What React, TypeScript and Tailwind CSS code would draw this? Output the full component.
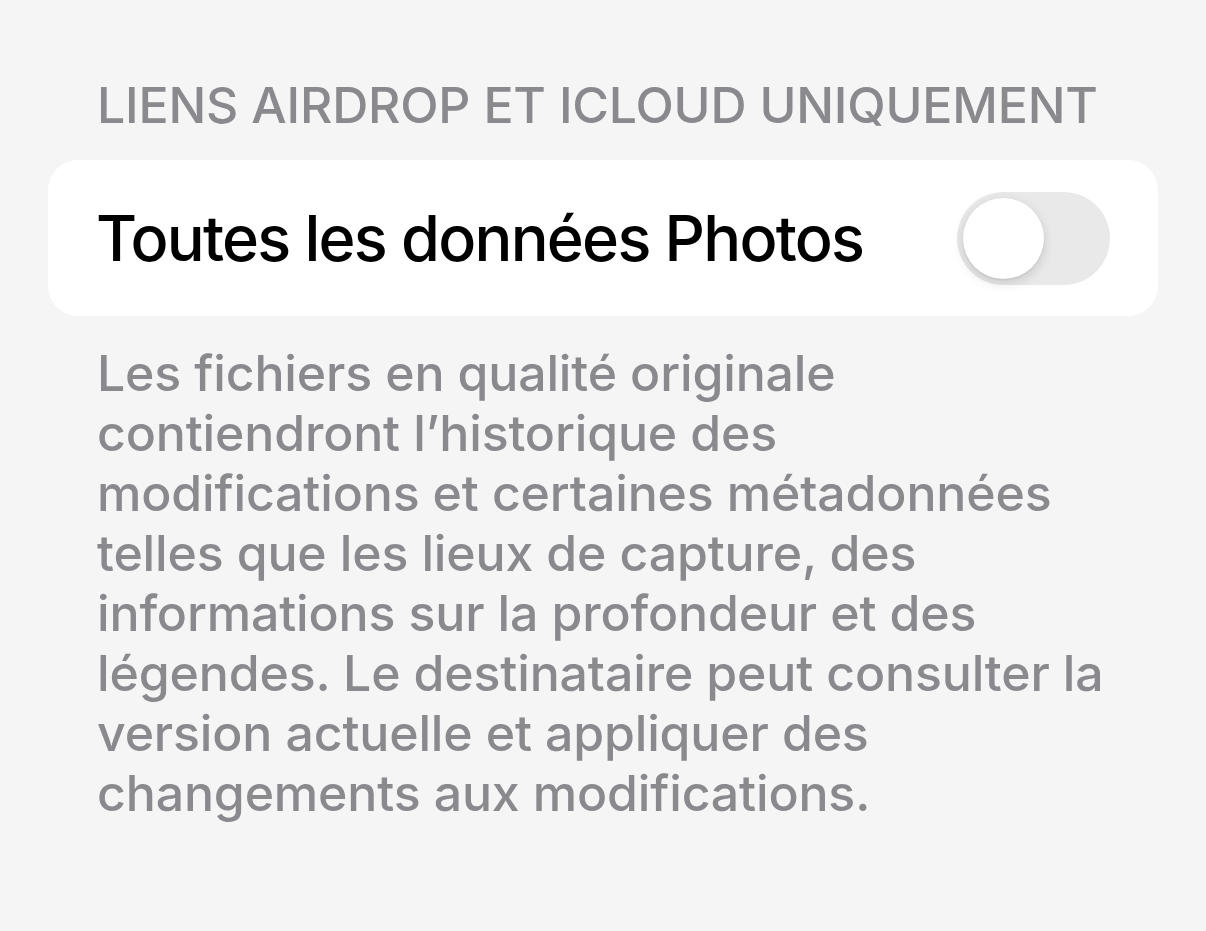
export default function App() {
  const lines = [
    "Les fichiers en qualité originale",
    "contiendront l’historique des",
    "modifications et certaines métadonnées",
    "telles que les lieux de capture, des",
    "informations sur la profondeur et des",
    "légendes. Le destinataire peut consulter la",
    "version actuelle et appliquer des",
    "changements aux modifications.",
  ]

  return (
    <div className="min-h-screen w-full bg-[#f5f5f5] font-['Inter','Noto_Sans',sans-serif] antialiased">
      <div className="px-[48px] pt-[78px]">
        <div className="pl-[49px] text-[50px] leading-[54px] font-medium tracking-[-0.2px] text-[#8a8a8e] whitespace-nowrap">
          LIENS AIRDROP ET ICLOUD UNIQUEMENT
        </div>

        <div className="mt-[28px] flex h-[156px] items-center justify-between rounded-[30px] bg-white pl-[48px] pr-[48px]">
          <span className="text-[63px] font-medium tracking-[-1.75px] text-black whitespace-nowrap">
            Toutes les données Photos
          </span>
          <div className="relative h-[93px] w-[153px] rounded-full bg-[#e9e9ea]">
            <div className="absolute left-[6px] top-[6px] h-[81px] w-[81px] rounded-full bg-white shadow-[0_4px_12px_rgba(0,0,0,0.14),0_1px_2px_rgba(0,0,0,0.08)]" />
          </div>
        </div>

        <div className="mt-[27px] pl-[49px] text-[50px] leading-[60px] font-medium tracking-[-0.15px] text-[#8a8a8e]">
          {lines.map((l) => (
            <div key={l} className="whitespace-nowrap">
              {l}
            </div>
          ))}
        </div>
      </div>
    </div>
  )
}
